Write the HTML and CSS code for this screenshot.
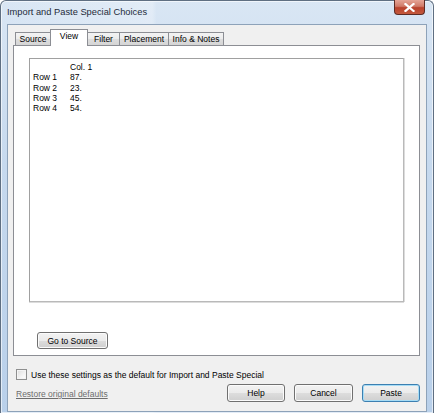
FILE: index.html
```html
<!DOCTYPE html>
<html>
<head>
  <title>Import and Paste Special Choices</title>
  <link rel="stylesheet" href="styles.css">
</head>
<body>
  <div class="window">
    <div class="titlebar">
      <span class="title">Import and Paste Special Choices</span>
      <div class="close-btn">
        <svg width="11" height="9" viewBox="0 0 11 9">
          <path d="M1.5 1 L9.5 8 M9.5 1 L1.5 8" stroke="#ffffff" stroke-width="2.2" stroke-linecap="square"/>
        </svg>
      </div>
    </div>

    <div class="client">
      <div class="tabs">
        <div class="tab tab-source">Source</div>
        <div class="tab tab-view selected">View</div>
        <div class="tab tab-filter">Filter</div>
        <div class="tab tab-placement">Placement</div>
        <div class="tab tab-info">Info &amp; Notes</div>
      </div>

      <div class="panel">
        <div class="data-box">
          <table class="data">
            <tr><td class="label"></td><td>Col. 1</td></tr>
            <tr><td class="label">Row 1</td><td>87.</td></tr>
            <tr><td class="label">Row 2</td><td>23.</td></tr>
            <tr><td class="label">Row 3</td><td>45.</td></tr>
            <tr><td class="label">Row 4</td><td>54.</td></tr>
          </table>
        </div>
        <button class="button go-source">Go to Source</button>
      </div>

      <label class="check-row">
        <span class="checkbox"></span>
        <span>Use these settings as the default for Import and Paste Special</span>
      </label>

      <div class="footer">
        <a href="#" class="restore">Restore original defaults</a>
        <div class="footer-buttons">
          <button class="button btn-help">Help</button>
          <button class="button btn-cancel">Cancel</button>
          <button class="button btn-paste default">Paste</button>
        </div>
      </div>
    </div>
  </div>
</body>
</html>
```

FILE: styles.css
```css
html, body {
  margin: 0;
  padding: 0;
  background: #ffffff;
}

body {
  font-family: 'Liberation Sans', Arial, sans-serif;
  font-size: 8.5px;
  color: #000000;
}

.window {
  position: relative;
  width: 434px;
  height: 413px;
  box-sizing: border-box;
  border: 1px solid #5f6f82;
  border-bottom: none;
  border-radius: 6px 6px 0 0;
  padding: 0 6px;
  background: linear-gradient(90deg, rgba(255,255,255,0) 0%, rgba(255,255,255,0.25) 35%, rgba(255,255,255,0) 36%, rgba(255,255,255,0) 100%),
              linear-gradient(180deg, #d9e6f4 0%, #c6d9ee 40%, #b9d0ea 100%);
  box-shadow: inset 0 0 0 1px rgba(255,255,255,0.6);
}

.titlebar {
  height: 23px;
  display: flex;
  align-items: center;
  position: relative;
}

.title {
  font-size: 9.3px;
  color: #1e2b3a;
  padding-left: 0;
  margin-top: -1px;
}

.close-btn {
  position: absolute;
  top: -1px;
  right: 2px;
  width: 31px;
  height: 15px;
  box-sizing: border-box;
  border: 1px solid #5d2b24;
  border-top: none;
  border-radius: 0 0 4px 4px;
  background: linear-gradient(180deg, #e5a496 0%, #d07a68 45%, #b9412c 55%, #c45a3e 100%);
  display: flex;
  align-items: center;
  justify-content: center;
}

.client {
  height: 388px;
  box-sizing: border-box;
  border: 1px solid #8da2b9;
  background: #f0f0f0;
  display: flex;
  flex-direction: column;
}

.tabs {
  position: relative;
  z-index: 1;
  display: flex;
  align-items: flex-end;
  height: 16px;
  margin: 4px 6px 0 7px;
}

.tab {
  height: 13px;
  box-sizing: border-box;
  border: 1px solid #8c8e94;
  border-bottom: none;
  margin-left: -1px;
  background: linear-gradient(180deg, #f3f3f3 0%, #ebebeb 50%, #dddddd 51%, #d5d5d5 100%);
  text-align: center;
  line-height: 12px;
}

.tab:first-child {
  margin-left: 0;
}

.tab.selected {
  height: 17px;
  margin-bottom: -1px;
  background: #ffffff;
  line-height: 12px;
}

.tab-source { width: 36px; }
.tab-view { width: 38px; }
.tab-filter { width: 33px; }
.tab-placement { width: 50px; }
.tab-info { width: 56px; }

.panel {
  height: 311px;
  box-sizing: border-box;
  margin: 0 6px 0 5px;
  border: 1px solid #8c8e94;
  background: #ffffff;
  display: flex;
  flex-direction: column;
  align-items: flex-start;
}

.data-box {
  width: 375px;
  height: 244px;
  box-sizing: border-box;
  margin: 12px 0 0 15px;
  border: 1px solid #a0a0a0;
  border-right-color: #b9b9b9;
  border-bottom-color: #b9b9b9;
  box-shadow: 0 1px 0 #dcdcdc, 1px 0 0 #dcdcdc;
  background: #ffffff;
  padding: 3px 0 0 3px;
}

.data {
  border-collapse: collapse;
}

.data td {
  padding: 0;
  height: 10.3px;
  line-height: 10.3px;
  vertical-align: middle;
}

.data td.label {
  width: 37px;
}

.button {
  font-family: 'Liberation Sans', Arial, sans-serif;
  font-size: 8.5px;
  color: #000000;
  height: 18px;
  box-sizing: border-box;
  border: 1px solid #707070;
  border-radius: 3px;
  padding: 0;
  background: linear-gradient(180deg, #f2f2f2 0%, #ebebeb 50%, #dddddd 51%, #cfcfcf 100%);
  box-shadow: inset 0 0 0 1px #fbfbfb;
}

.go-source {
  width: 71px;
  height: 17px;
  margin: 30px 0 0 23px;
}

.check-row {
  display: flex;
  align-items: center;
  margin: 13px 0 0 8px;
  height: 11px;
}

.checkbox {
  width: 11px;
  height: 11px;
  box-sizing: border-box;
  border: 1px solid #8e8f8f;
  background: linear-gradient(135deg, #dcdcdc 0%, #f4f4f4 60%, #ffffff 100%);
  box-shadow: inset 0 0 0 1px #f4f4f4;
  margin-right: 4px;
}

.footer {
  display: flex;
  align-items: center;
  justify-content: space-between;
  margin: 4px 6px 0 8px;
}

.restore {
  color: #6d6d6d;
  text-decoration: underline;
  margin-top: 2px;
}

.footer-buttons {
  display: flex;
  gap: 9px;
}

.btn-help { width: 58px; }
.btn-cancel { width: 59px; }
.btn-paste { width: 58px; }

.button.default {
  border-color: #3c7fb1;
  box-shadow: inset 0 0 0 1px #a7dcf5;
  background: linear-gradient(180deg, #eaf6fd 0%, #d9f0fc 50%, #bee6fd 51%, #a7d9f5 100%);
  background: linear-gradient(180deg, #f2f2f2 0%, #ebebeb 50%, #dddddd 51%, #cfcfcf 100%);
}
```
